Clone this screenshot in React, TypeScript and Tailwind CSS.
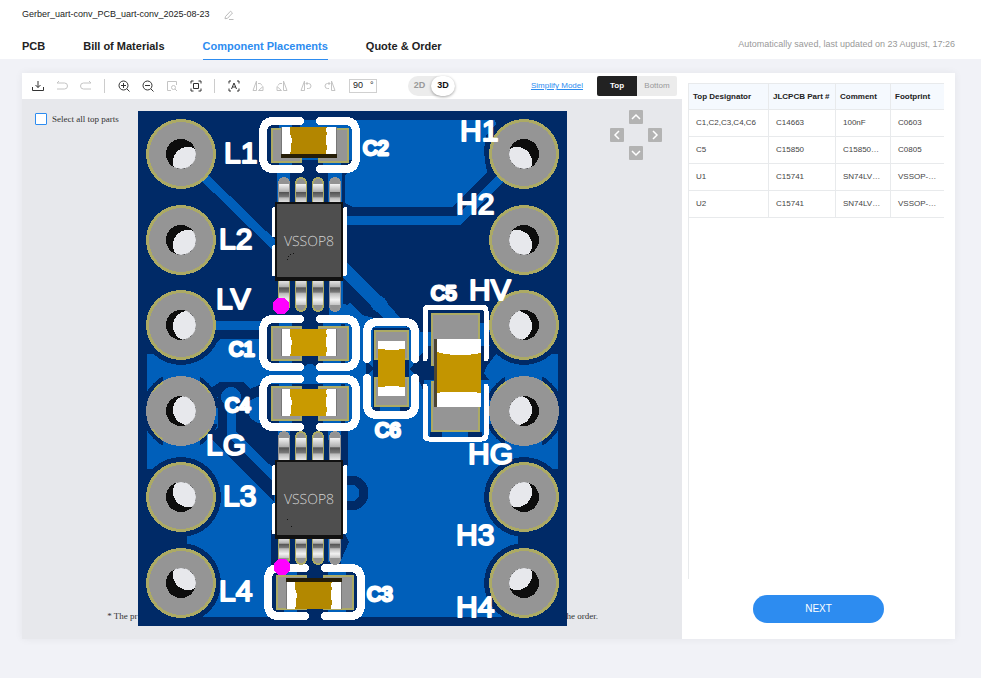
import React from "react";

type Row = { designator: string; part: string; comment: string; footprint: string };

const rows: Row[] = [
  { designator: "C1,C2,C3,C4,C6", part: "C14663", comment: "100nF", footprint: "C0603" },
  { designator: "C5", part: "C15850", comment: "C15850…", footprint: "C0805" },
  { designator: "U1", part: "C15741", comment: "SN74LV…", footprint: "VSSOP-…" },
  { designator: "U2", part: "C15741", comment: "SN74LV…", footprint: "VSSOP-…" },
];

const DARK = "#002a67";
const COPPER = "#005fba";
const GOLD = "#acaa64";
const PAD = "#959595";

/* Vertical centre of each header pin, and how far the view through the hole is shifted. */
const pins = [
  { y: 154, shift: 8, cleared: false },
  { y: 240, shift: 5, cleared: false },
  { y: 325, shift: 1, cleared: true },
  { y: 411, shift: -1, cleared: true },
  { y: 497, shift: -5, cleared: true },
  { y: 583, shift: -8, cleared: true },
];

function Pin({ x, y, shift, side, ground }: { x: number; y: number; shift: number; side: number; ground: boolean }) {
  const id = `hole-${x}-${y}`;
  return (
    <g>
      <circle cx={x} cy={y} r={35} fill={ground ? PAD : GOLD} />
      {ground && (
        <circle cx={x} cy={y} r={34} fill="none" stroke={GOLD} strokeWidth={2} strokeDasharray="14 39.4" strokeDashoffset={-20} />
      )}
      <circle cx={x} cy={y} r={32} fill={PAD} />
      <clipPath id={id}>
        <circle cx={x} cy={y} r={15} />
      </clipPath>
      <circle cx={x} cy={y} r={15} fill="#0d0d0d" />
      <circle cx={x + side * 7} cy={y + shift} r={15} fill="#e7e8ec" clipPath={`url(#${id})`} />
    </g>
  );
}

function Capacitor({ x, y, shade, body }: { x: number; y: number; shade: "top" | "bottom" | "none"; body: string }) {
  return (
    <g>
      <g fill={COPPER}>
        <rect x={x + 8} y={y - 8} width={13} height={50} />
        <rect x={x + 52} y={y - 8} width={18} height={50} />
      </g>
      <g fill="none" stroke="#fff" strokeWidth={8} strokeLinecap="round">
        <path d={`M${x + 29} ${y - 7}H${x + 3}Q${x - 8} ${y - 7} ${x - 8} ${y + 5}V${y + 29}Q${x - 8} ${y + 41} ${x + 3} ${y + 41}H${x + 29}`} />
        <path d={`M${x + 49} ${y - 7}H${x + 74}Q${x + 85} ${y - 7} ${x + 85} ${y + 5}V${y + 29}Q${x + 85} ${y + 41} ${x + 74} ${y + 41}H${x + 49}`} />
      </g>
      <g fill={PAD} stroke={GOLD} strokeWidth={1.5}>
        <rect x={x + 1} y={y + 1} width={29} height={33} />
        <rect x={x + 48} y={y + 1} width={29} height={33} />
      </g>
      {shade === "bottom" && <rect x={x + 10} y={y + 24} width={56} height={6} fill="#261e08" />}
      {shade === "top" && <rect x={x + 10} y={y + 3} width={56} height={6} fill="#261e08" />}
      <g transform={`translate(${x + 10} ${y + (shade === "bottom" ? -1 : shade === "top" ? 7 : 3)})`}>
        <rect width={56} height={27} fill="#fff" />
        <path d="M9 0H46Q44 3 46 6Q43 13 46 20L45 27H9Q11 22 10 18Q12 12 9 7Z" fill={body} />
        <path d="M0 0V27M55.500 0V27" stroke="#777" />
      </g>
    </g>
  );
}

function Chip({ y, lower, upper }: { y: number; upper: number; lower: number }) {
  return (
    <g>
      {[284, 301, 318, 335].map((x, i) => (
        <g key={x}>
          <rect x={x - 6} y={y - upper} width={12} height={upper + 8} rx={6} fill={i === 3 || i === 0 ? PAD : GOLD} />
          <rect x={x - 4} y={y - upper + 2} width={8} height={upper} rx={4} fill="#929292" />
          <rect x={x - 5} y={y - upper + 7} width={10} height={upper} fill="url(#lead)" />
          <rect x={x - 6} y={y + 72} width={12} height={lower + 8} rx={6} fill={i === 3 ? PAD : GOLD} />
          <rect x={x - 4} y={y + 76} width={8} height={lower + 2} rx={4} fill="#929292" />
          <rect x={x - 5} y={y + 77} width={10} height={lower - 4} fill="url(#lead)" />
        </g>
      ))}
      <path d={`M274 ${y + 7}V${y + 33}M274 ${y + 45}V${y + 72}M345 ${y + 7}V${y + 72}`} stroke="#fff" strokeWidth={4} strokeLinecap="round" />
      <rect x={275} y={y} width={68} height={79} rx={1} fill="#111" />
      <rect x={277} y={y + 2} width={64} height={73} fill="#4e4e4e" />
      <text x={309} y={y + 44} textAnchor="middle" textRendering="geometricPrecision" fill="#d2d2d2" className="font-['Open_Sans',sans-serif] text-[14px] font-light">
        VSSOP8
      </text>
    </g>
  );
}

const bigLabels: [string, number, number][] = [
  ["L1", 224, 163], ["L2", 219, 249], ["LV", 216, 309], ["LG", 206, 455], ["L3", 223, 506], ["L4", 219, 601],
  ["H1", 460, 141], ["H2", 456, 214], ["HV", 469, 300], ["HG", 468, 464], ["H3", 456, 545], ["H4", 456, 617],
];
const smallLabels: [string, number, number][] = [
  ["C2", 363, 155], ["C1", 229, 356], ["C4", 225, 412], ["C6", 375, 437], ["C5", 431, 300], ["C3", 367, 601],
];

function Board() {
  return (
    <svg viewBox="138 111 429 515" shapeRendering="crispEdges" className="block w-full" role="img" aria-label="Board, top side">
      <defs>
        <linearGradient id="lead" x1="0" y1="0" x2="0" y2="1">
          <stop offset="0" stopColor="#f4f4f4" />
          <stop offset="0.3" stopColor="#b0b0b0" />
          <stop offset="0.34" stopColor="#555" />
          <stop offset="0.5" stopColor="#777" />
          <stop offset="0.56" stopColor="#bbb" />
          <stop offset="0.8" stopColor="#f2f2f2" />
          <stop offset="1" stopColor="#c4c4c4" />
        </linearGradient>
      </defs>
      <rect x={138} y={111} width={429} height={515} fill={DARK} />

      {/* upper copper area and traces */}
      <path d="M300 120H495L496 124L486 136Q482 152 487 172L453 207H353L345 203V175L352 168V160H300Z" fill={COPPER} />
      <g fill="none" stroke={COPPER} strokeWidth={9}>
        <path d="M340 220H459L502 177" />
        <path d="M204 177L276 247" />
        <path d="M343 268L382 307L402 330" strokeWidth={13} />
      </g>
      <circle cx={379} cy={304} r={8} fill={COPPER} />
      <path d="M277 170H290V203H277ZM328 170H342V203H328ZM329 281H343V318H329Z" fill={COPPER} />

      {/* ground plane */}
      <path d="M147 354H205L220 339H262L278 345H340V310L350 303L362 315L420 330V332H490V346H480V354H558V469H518V617H187V469H147Z" fill={COPPER} />
      <path d="M340 303Q352 304 359 318L366 326V350L358 366H340Z" fill={COPPER} />
      <path d="M415 360L424 352V346H490V354H496L487 366L484 373L489 380H424V392L415 372Z" fill={DARK} />
      {[181, 524].map((x) =>
        pins.map((p) => p.cleared && <circle key={`${x}-${p.y}`} cx={x} cy={p.y} r={p.y === 411 ? 39 : 40} fill={DARK} />)
      )}
      <path d="M163 368H200V454H163ZM181 408H220V424H181ZM505 368H542V454H505ZM483 400H524V424H483Z" fill={COPPER} />
      <path d="M215 325H264M440 327H500" stroke={COPPER} strokeWidth={9} />
      <circle cx={181} cy={497} r={40} fill={DARK} />
      <circle cx={524} cy={497} r={40} fill={DARK} />

      {/* clearances and traces inside the plane */}
      <path d="M211 388L220 382H243L250 389L264 383V458L274 470V502L214 442L208 436L218 428V398Z" fill={DARK} />
      <path d="M262 396Q246 399 246 408Q250 424 265 424Z" fill={COPPER} />
      <circle cx={231} cy={397} r={10} fill={COPPER} />
      <path d="M231 395V433L276 478" fill="none" stroke={COPPER} strokeWidth={9} />
      <path d="M262 424H348V466H271L262 457ZM271 530H343L349 542L341 560V577H271Z" fill={DARK} />
      <path d="M328 422H341V440H328ZM278 422H290V440H278ZM328 536H341V562H328Z" fill={COPPER} />
      <circle cx={351} cy={493} r={13} fill="none" stroke={DARK} strokeWidth={9} />
      <path d="M264 324H345V366H264ZM264 384H345V425H264Z" fill={DARK} />
      <circle cx={310} cy={372} r={8} fill={COPPER} />
      <path d="M268 570H358V617H268Z" fill={DARK} />
      <path d="M373 328H409V413H373ZM366 361L374 369L366 376ZM416 361L410 369L416 376Z" fill={DARK} />
      <path d="M430 432H482V439H430Z" fill={DARK} />
      <path d="M380 405H400V412H380ZM442 432H468V439H442Z" fill={COPPER} />

      {[181, 524].map((x) =>
        pins.map((p) => <Pin key={`${x}-${p.y}`} x={x} y={p.y} shift={p.shift} side={x === 181 ? 1 : -1} ground={p.y === 411} />)
      )}

      <Capacitor x={271} y={128} shade="bottom" body="#b38600" />
      <Capacitor x={271} y={326} shade="none" body="#c99a00" />
      <Capacitor x={271} y={386} shade="none" body="#c99a00" />
      <Capacitor x={276} y={575} shade="top" body="#b38800" />
      <Chip y={202} upper={25} lower={30} />
      <Chip y={460} upper={29} lower={25} />

      {/* C6 */}
      <g fill="none" stroke="#fff" strokeWidth={8} strokeLinecap="round">
        <path d="M367 359V333Q367 322 378 322H404Q415 322 415 333V359" />
        <path d="M367 378V404Q367 415 378 415H404Q415 415 415 404V378" />
      </g>
      <path d="M375 331H408V359H375ZM375 378H408V406H375Z" fill={PAD} stroke={GOLD} strokeWidth={1.5} />
      <rect x={378} y={341} width={27} height={55} fill="#fff" />
      <path d="M378 349L392 350L405 349V387L392 386L378 387Z" fill="#c59700" />

      {/* C5 */}
      <g fill="none" stroke="#fff" strokeWidth={5} strokeLinecap="round">
        <path d="M425 359V311Q425 307 429 307H482Q486 307 486 311V359" />
        <path d="M425 386V435Q425 439 429 439H482Q486 439 486 435V386" />
      </g>
      <path d="M432 314H479V365H432ZM432 382H479V431H432Z" fill={PAD} stroke={GOLD} strokeWidth={1.5} />
      <rect x={434} y={339} width={3} height={68} fill="#4c4532" />
      <rect x={437} y={339} width={44} height={68} fill="#fff" />
      <path d="M437 352Q446 355 459 355Q472 355 481 353V393Q468 391 459 392Q446 391 437 393Z" fill="#c39500" />

      <g fill="#fff" stroke="#fff" strokeLinejoin="round" className="font-['Liberation_Sans',Arial,sans-serif]">
        {bigLabels.map(([t, x, y]) => (
          <text key={t} x={x} y={y} strokeWidth={2} className="text-[30px]">{t}</text>
        ))}
        {smallLabels.map(([t, x, y]) => (
          <text key={t} x={x} y={y} strokeWidth={3} className="text-[20px]">{t}</text>
        ))}
      </g>
      <path d="M287 260Q289 254 295 253" fill="none" stroke="#111" strokeDasharray="1 2" />
      <path d="M287 519h1M291 526h1" stroke="#111" />
      <circle cx={281} cy={306} r={8.5} fill="#f0f" />
      <circle cx={282} cy={567} r={8.5} fill="#f0f" />
    </svg>
  );
}

function Tool({ label, muted, children }: { label: string; muted?: boolean; children: React.ReactNode }) {
  return (
    <button type="button" aria-label={label} className={`flex h-6 w-6 items-center justify-center ${muted ? "text-[#c4c4c4]" : "text-[#333]"}`}>
      <svg viewBox="0 0 12 12" className="h-3 w-3" fill="none" stroke="currentColor" strokeWidth={1}>
        {children}
      </svg>
    </button>
  );
}

function Arrow({ label, d, place }: { label: string; d: string; place: string }) {
  return (
    <button type="button" aria-label={label} className={`h-[14px] w-[14px] rounded-[1px] bg-[#b3b3b3] text-white ${place}`}>
      <svg viewBox="0 0 14 14" className="h-full w-full" fill="none" stroke="currentColor" strokeWidth={1.5}>
        <path d={d} />
      </svg>
    </button>
  );
}

export default function App() {
  const tabs = ["PCB", "Bill of Materials", "Component Placements", "Quote & Order"];
  return (
    <div className="min-h-screen bg-[#f1f2f7] font-['Liberation_Sans',Arial,sans-serif] text-[#222]">
      <header className="bg-white px-[22px]">
        <div className="flex h-[30px] items-center gap-[14px]">
          <h1 className="text-[9px]">Gerber_uart-conv_PCB_uart-conv_2025-08-23</h1>
          <button type="button" aria-label="Rename" className="text-[#bbb]">
            <svg viewBox="0 0 10 10" className="h-[10px] w-[10px]" fill="none" stroke="currentColor">
              <path d="M1.500 6.500L6.500 1.200L8.500 3L3.500 8.300L1 8.700ZM5 9.500H9.500" />
            </svg>
          </button>
        </div>
        <div className="flex h-[29px] items-start justify-between pr-1">
          <nav className="flex gap-[38px]">
            {tabs.map((t) => (
              <a key={t} href="#" className={`flex h-[30px] items-center border-b pt-1 text-[11px] font-bold whitespace-nowrap ${t === "Component Placements" ? "border-[#2d8cf0] text-[#2d8cf0]" : "border-transparent"}`}>
                {t}
              </a>
            ))}
          </nav>
          <p className="flex h-[29px] items-center text-[9px] text-[#999]">Automatically saved, last updated on 23 August, 17:26</p>
        </div>
      </header>

      <main className="mr-[26px] ml-[22px] mt-[14px] flex bg-white shadow-[0_0_8px_rgba(0,0,0,0.06)]">
        <section className="flex min-w-0 flex-1 flex-col">
          <div className="flex h-[26px] items-center pr-[5px] pl-1">
            <Tool label="Download"><path d="M6 1V7.500M3.500 5L6 7.500L8.500 5M.5 7V10.500H11.500V7" /></Tool>
            <Tool label="Undo" muted><path d="M3 1L1 3H8.500A2.500 2.500 0 0 1 8.500 9H1" /></Tool>
            <Tool label="Redo" muted><path d="M9 1L11 3H3.500A2.500 2.500 0 0 0 3.500 9H11" /></Tool>
            <span className="mr-[7px] ml-[6px] h-[14px] w-px bg-[#ccc]" />
            <Tool label="Zoom in"><circle cx="5.500" cy="5.500" r="4.500" /><path d="M5.500 3V8M3 5.500H8M9 9L11.500 11.500" /></Tool>
            <Tool label="Zoom out"><circle cx="5.500" cy="5.500" r="4.500" /><path d="M3 5.500H8M9 9L11.500 11.500" /></Tool>
            <Tool label="Zoom to area" muted><path d="M5 10.500H1.500V1.500H10.500V5" /><circle cx="7.500" cy="7.500" r="2" /><path d="M9 9L11 11" /></Tool>
            <Tool label="Fit view"><path d="M1 3.500V1H3.500M8.500 1H11V3.500M11 8.500V11H8.500M3.500 11H1V8.500M3.500 3.500H8.500V8.500H3.500Z" /></Tool>
            <span className="mr-[7px] ml-[6px] h-[14px] w-px bg-[#ccc]" />
            <Tool label="Auto align"><path d="M1 3.500V1H3M9 1H11V3.500M11 8.500V11H9M3 11H1V8.500M3.500 9L6 3L8.500 9M4.500 7H7.500" /></Tool>
            <Tool label="Rotate left" muted><path d="M1 10.500L4.500 1V10.500ZM6.500 10.500H11V6.500L6.500 10.500M6 3.500Q9 2.500 10 5.500" /></Tool>
            <Tool label="Rotate right" muted><path d="M11 10.500L7.500 1V10.500ZM5.500 10.500H1V6.500L5.500 10.500M6 3.500Q3 2.500 2 5.500" /></Tool>
            <Tool label="Rotate counter-clockwise" muted><path d="M1 10.500L4.500 1V10.500ZM6 3.500H8.500A2.500 2.500 0 0 1 8.500 8.500H7M7.500 2L6 3.500L7.500 5" /></Tool>
            <Tool label="Rotate clockwise" muted><path d="M11 10.500L7.500 1V10.500ZM6 3.500H3.500A2.500 2.500 0 0 0 3.500 8.500H5M4.500 2L6 3.500L4.500 5" /></Tool>
            <label className="ml-[7px] flex h-[14px] w-7 items-center border border-[#d0d0d0] text-[9px]">
              <input aria-label="Angle in degrees" defaultValue="90" className="w-[20px] bg-transparent pl-[3px] outline-none" />
              °
            </label>
            <div className="ml-[31px] flex h-5 w-[47px] items-center rounded-full bg-[#ececec] text-[9px] font-bold">
              <button type="button" className="flex-1 text-[#999]">2D</button>
              <button type="button" className="h-5 w-6 rounded-full bg-white text-[#111] shadow-[0_1px_3px_rgba(0,0,0,0.35)]">3D</button>
            </div>
            <a href="#" className="ml-auto text-[8px] whitespace-nowrap text-[#2d8cf0] underline">Simplify Model</a>
            <div className="ml-[14px] flex h-5 overflow-hidden rounded-[2px] text-[8px]">
              <button type="button" className="w-10 bg-[#222] font-bold text-white">Top</button>
              <button type="button" className="w-10 bg-[#ececec] text-[#999]">Bottom</button>
            </div>
          </div>

          <div className="grid flex-1 grid-cols-[1fr_429px_1fr] bg-[#e7e8ec] pt-3 pb-[13px] font-['Liberation_Serif',serif] text-[9px] text-[#333]">
            <div className="flex flex-col justify-between">
              <label className="flex items-center gap-[5px] pt-[2px] pl-[13px] leading-3 whitespace-nowrap">
                <input type="checkbox" className="h-3 w-3 appearance-none rounded-[1px] border border-[#2d8cf0] bg-white" />
                Select all top parts
              </label>
              <p className="pb-1 text-right leading-3">* The pr</p>
            </div>
            <Board />
            <div className="flex flex-col justify-between">
              <div className="-mt-px ml-[43px] grid w-[52px] grid-cols-3 gap-x-[5px] gap-y-1">
                <Arrow label="Move up" place="col-start-2" d="M3 9L7 5L11 9" />
                <Arrow label="Move left" place="col-start-1 row-start-2" d="M9 3L5 7L9 11" />
                <Arrow label="Move right" place="col-start-3 row-start-2" d="M5 3L9 7L5 11" />
                <Arrow label="Move down" place="col-start-2 row-start-3" d="M3 5L7 9L11 5" />
              </div>
              <p className="pb-1 leading-3">he order.</p>
            </div>
          </div>
        </section>

        <aside className="flex w-[273px] flex-col pt-[10px] pr-[11px] pb-4 pl-[6px]">
          <div className="mb-4 flex-1 border-l border-[#e8eaec]">
            <table className="w-full table-fixed border-separate border-spacing-0 text-left text-[8px] whitespace-nowrap">
              <colgroup>
                <col className="w-[80px]" />
                <col className="w-[67px]" />
                <col className="w-[55px]" />
                <col />
              </colgroup>
              <thead>
                <tr className="h-[27px] bg-[#f5f9fe]">
                  {["Top Designator", "JLCPCB Part #", "Comment", "Footprint"].map((h) => (
                    <th key={h} className="border-y border-r border-[#e8eaec] pl-1 font-bold last:border-r-0">{h}</th>
                  ))}
                </tr>
              </thead>
              <tbody className="text-[#444]">
                {rows.map((r) => (
                  <tr key={r.designator} className="h-[27px]">
                    {[r.designator, r.part, r.comment, r.footprint].map((c, i) => (
                      <td key={i} className="border-r border-b border-[#e8eaec] pl-[7px] last:border-r-0">{c}</td>
                    ))}
                  </tr>
                ))}
              </tbody>
            </table>
          </div>
          <button type="button" className="ml-[5px] h-7 w-[131px] self-center rounded-full bg-[#2d8cf0] pb-[2px] text-[10px] text-white">NEXT</button>
        </aside>
      </main>
    </div>
  );
}
